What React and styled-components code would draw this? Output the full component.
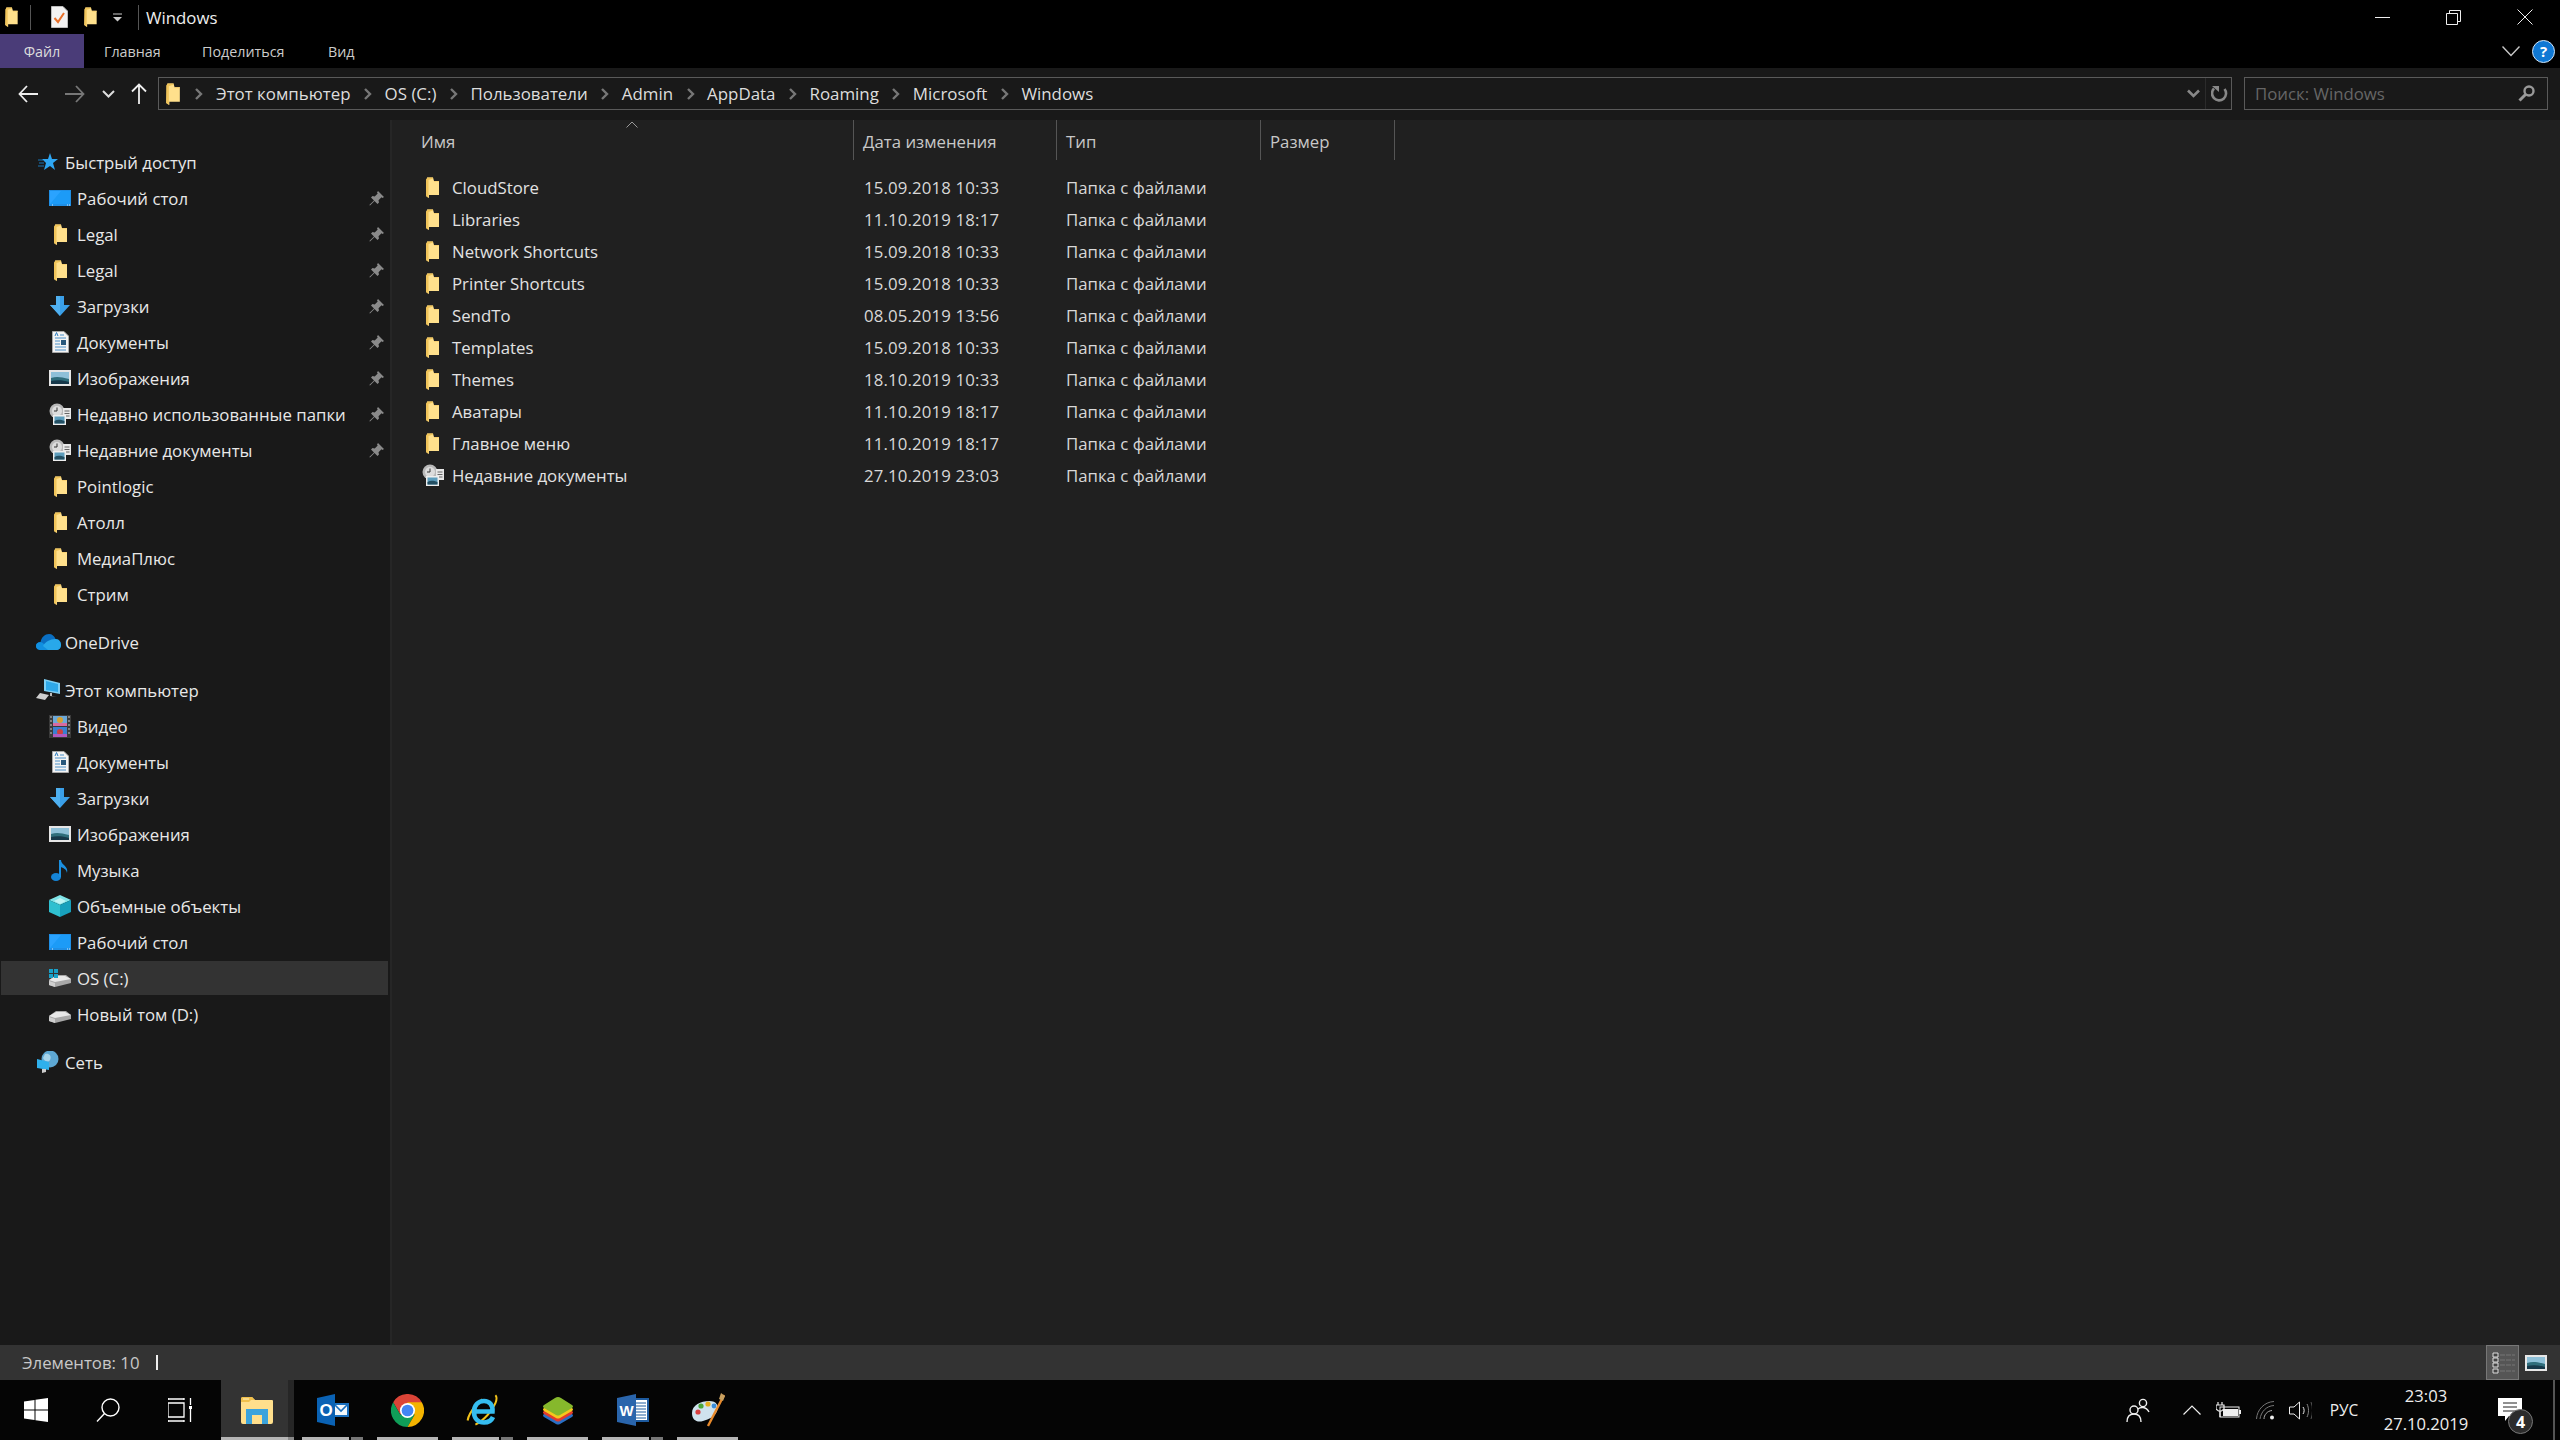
import React from "react";
import styled, { createGlobalStyle } from "styled-components";

const Global = createGlobalStyle`
  html, body { margin: 0; padding: 0; background: #000; overflow: hidden; }
  * { box-sizing: border-box; }
  svg { display: block; flex: none; }
`;
const FONT = `"Open Sans", "Noto Sans", sans-serif`;

const Win = styled.div`
  width: 2560px; height: 1440px; display: flex; flex-direction: column;
  font-family: ${FONT}; font-size: 16.8px; color: #e6e6e6; background: #191919; overflow: hidden;
`;
const TitleBar = styled.div`
  height: 34px; background: #000; display: flex; align-items: center; padding-left: 4px; flex: none;
`;
const QuickSlot = styled.div`
  display: flex; align-items: center; justify-content: center; width: ${p => p.$w}px; margin-right: ${p => p.$mr || 0}px;
`;
const TitleSep = styled.div`
  width: 1px; height: 25px; background: #555; margin-right: ${p => p.$mr}px;
`;
const TitleText = styled.div`
  font-size: 16.8px; color: #eee; flex: 1;
`;
const WinBtn = styled.div`
  width: 71px; display: flex; justify-content: center; align-items: center;
`;
const Ribbon = styled.div`
  height: 34px; flex: none; background: #000; display: flex; align-items: stretch; font-size: 14.3px; color: #ccc;
`;
const FileTab = styled.div`
  width: 84px; background: #4a3c78; color: #ddd; display: flex; align-items: center; justify-content: center;
`;
const Tab = styled.div`
  width: ${p => p.$w}px; padding-left: ${p => p.$pl}px; display: flex; align-items: center;
`;
const RibbonRight = styled.div`
  margin-left: auto; display: flex; align-items: center; gap: 12px; padding-right: 5px;
`;
const Help = styled.div`
  width: 23px; height: 23px; border-radius: 50%; background: #0f78d4; border: 1px solid #d0e4f7; color: #fff;
  font-size: 15px; font-weight: 700; display: flex; align-items: center; justify-content: center;
`;
const AddressRow = styled.div`
  height: 52px; flex: none; background: #191919; display: flex; align-items: flex-start; padding: 9px 12px 0 18px;
`;
const NavBtn = styled.div`
  width: ${p => p.$w}px; height: 33px; display: flex; align-items: center;
`;
const AddressBox = styled.div`
  width: 2074px; height: 33px; border: 1px solid #5a5a5a; display: flex; align-items: center; padding-left: 6px; margin-right: 12px;
`;
const Crumb = styled.span`
  font-size: 16.9px; color: #ddd; white-space: nowrap;
`;
const CrumbSep = styled.div`
  width: ${p => p.$w || 34}px; display: flex; justify-content: center;
`;
const AddrTail = styled.div`
  margin-left: auto; height: 100%; display: flex; align-items: center;
`;
const AddrDrop = styled.div`
  width: 24px; height: 100%; padding-right: 1px; display: flex; align-items: center; justify-content: center; border-right: 1px solid #2b2b2b;
`;
const AddrRefresh = styled.div`
  width: 25px; padding-left: 2px; display: flex; justify-content: center;
`;
const SearchBox = styled.div`
  width: 304px; height: 33px; border: 1px solid #5a5a5a; display: flex; align-items: center; justify-content: space-between;
  padding: 0 12px 0 10px; color: #666;
`;
const Main = styled.div`
  flex: 1; min-height: 0; display: flex;
`;
const Sidebar = styled.div`
  width: 392px; flex: none; background: #191919; border-right: 2px solid #262626; padding: 25px 2px 0 1px;
`;
const SideRow = styled.div`
  height: 34px; margin: ${p => (p.$top ? 14 : 0)}px 0 2px 0; display: flex; align-items: center;
  padding-left: ${p => (p.$head ? 35 : 47)}px; padding-right: 2px; background: ${p => (p.$sel ? "#333" : "transparent")};
  color: #e8e8e8;
`;
const SideIcon = styled.div`
  width: 24px; height: 24px; display: flex; align-items: center; justify-content: center; margin-right: 5px;
`;
const SideLabel = styled.span`
  flex: 1; white-space: nowrap;
`;
const PinSlot = styled.div`
  width: 17px;
`;
const ListPane = styled.div`
  flex: 1; background: #202020; position: relative;
`;
const HeaderRow = styled.div`
  height: 40px; display: flex; margin-bottom: 11px; color: #c8c8c8;
`;
const HeadCell = styled.div`
  width: ${p => p.$w}px; padding-left: ${p => p.$pl}px; border-right: 1px solid #555; display: flex; align-items: center; padding-top: 3px;
`;
const SortMark = styled.div`
  position: absolute; left: 234px; top: 1px;
`;
const FileRow = styled.div`
  height: 32px; display: flex; align-items: center; color: #e2e2e2;
`;
const NameCell = styled.div`
  width: 472px; padding-left: 33px; display: flex; align-items: center; flex: none;
`;
const FileIconSlot = styled.div`
  width: 27px; display: flex; margin-left: ${p => (p.$recent ? -3 : 0)}px; margin-right: ${p => (p.$recent ? 3 : 0)}px;
`;
const DateCell = styled.div`
  width: 202px; color: #d8d8d8; flex: none; letter-spacing: 0.15px;
`;
const TypeCell = styled.div`
  color: #d8d8d8;
`;
const StatusBar = styled.div`
  height: 35px; flex: none; background: #333; display: flex; align-items: center; padding-left: 22px; color: #c8c8c8;
`;
const StatusDivider = styled.div`
  width: 2px; height: 15px; background: #eee; margin-left: 16px;
`;
const ViewBtns = styled.div`
  margin-left: auto; display: flex; align-items: center; height: 100%; padding-right: 13px;
`;
const ViewBtn = styled.div`
  width: 33px; height: 35px; display: flex; align-items: center; justify-content: center; padding-left: 2px;
  background: #555; border: 1px solid #777; margin-right: 6px;
`;
const Taskbar = styled.div`
  height: 60px; flex: none; background: #050505; display: flex; align-items: stretch;
`;
const SysBtn = styled.div`
  width: 72px; display: flex; align-items: center; justify-content: center; flex: none;
`;
const ActiveApp = styled.div`
  width: 67px; height: 60px; margin-left: 5px; padding-left: 4px; position: relative; display: flex; align-items: center; justify-content: center; flex: none;
  background: #333;
`;
const AppSlot = styled.div`
  width: 75px; height: 60px; padding-right: 14px; position: relative; display: flex; align-items: center; justify-content: center; flex: none;
`;
const AppMark = styled.div`
  position: absolute; left: ${p => p.$l}px; bottom: 0; height: 3px; width: ${p => p.$w}px; background: ${p => p.$c || "#b5b5b5"};
`;
const ActiveSplit = styled.div`
  width: 6px; flex: none; background: #262626; position: relative; margin-right: 8px; height: 60px;
`;
const Tray = styled.div`
  margin-left: auto; display: flex; align-items: center; height: 100%; color: #eee;
`;
const TraySlot = styled.div`
  width: ${p => p.$w}px; display: flex; align-items: center; justify-content: center; flex: none;
`;
const Lang = styled.div`
  width: 54px; text-align: center; font-size: 15.5px;
`;
const Clock = styled.div`
  width: 110px; text-align: center; font-size: 16.6px; line-height: 28px; color: #eee;
`;
const Notify = styled.div`
  width: 72px; height: 100%; padding-right: 14px; display: flex; align-items: center; justify-content: center; position: relative;
`;
const Badge = styled.div`
  position: absolute; left: 27px; top: 29px; width: 25px; height: 25px; border-radius: 50%; background: #2c2c2c; border: 1px solid #777;
  color: #fff; font-size: 16px; font-weight: 700; display: flex; align-items: center; justify-content: center;
`;
const ShowDesktop = styled.div`
  width: 2px; height: 100%; background: #555; margin-right: 5px; flex: none;
`;

/* ---- icons ---- */
const Folder = ({ w = 14, h = 21 }) => (
  <svg width={w} height={h} viewBox="0 0 14 21">
    <path d="M2 0.5H8L9 4H14V18H4V21L1 19Z" fill="#FFE08C" />
    <path d="M1 2.500L2.500 0.5H8V1.500L3.500 3V21L1 19Z" fill="#F0C45A" />
    <path d="M9 4H14V5H9Z" fill="#F8D070" />
  </svg>
);
const Desktop = () => (
  <svg width="22" height="16" viewBox="0 0 22 16">
    <rect width="22" height="16" fill="#1f8fe6" />
    <rect x="1" y="1" width="20" height="13" fill="#2aa3ff" />
    <path d="M1 14L12 1H21V14Z" fill="#1c9bf7" />
    <path d="M3 15h1M18 15h1M20 15h1" stroke="#cfeaff" />
  </svg>
);
const Star = () => (
  <svg width="20" height="18" viewBox="0 0 20 18">
    <path d="M12 0L14 6H20L15 10L17 17L12 13L6 17L8 10L4 6H10Z" fill="#2ea6f2" />
    <path d="M0 7H5M1 10H6M0 13H6" stroke="#1976b8" strokeWidth="1" />
  </svg>
);
const Download = () => (
  <svg width="20" height="20" viewBox="0 0 20 20">
    <path d="M6 0H14V9H20L10 20L0 9H6Z" fill="#3a9fe8" />
    <path d="M6 0H10V20L0 9H6Z" fill="#4fb0f0" />
  </svg>
);
const Doc = () => (
  <svg width="17" height="22" viewBox="0 0 17 22">
    <path d="M0.5 .5H12L16.500 5V21.500H.5Z" fill="#f3f3f3" stroke="#a8a8a8" />
    <path d="M8 4H12M3 7H14M3 10H8M3 13H8M3 16H14M3 19H14" stroke="#4a90c8" strokeWidth="1" />
    <rect x="9" y="9" width="5" height="5" fill="#27567a" />
    <path d="M3 5L4.500 1.500L6 5" stroke="#2a7cc0" fill="none" />
  </svg>
);
const Picture = () => (
  <svg width="22" height="16" viewBox="0 0 22 16">
    <rect width="22" height="16" fill="#e6e6e6" />
    <rect x="2" y="2" width="18" height="12" fill="#8ec0d8" />
    <path d="M2 8C8 6 12 7 20 9V14H2Z" fill="#2f6d7b" />
    <path d="M2 11C7 10 14 10 20 12V14H2Z" fill="#17384a" />
  </svg>
);
const Recent = () => (
  <svg width="22" height="22" viewBox="0 0 22 22">
    <circle cx="8" cy="8" r="7.500" fill="#b8b8b8" />
    <circle cx="8" cy="8" r="5" fill="#dcdcdc" />
    <path d="M8 4.500V8H5" stroke="#333" fill="none" />
    <rect x="14" y="5" width="8" height="11" fill="#e8e8e8" />
    <path d="M15.500 8H20.500M15.500 10.500H20.500M15.500 13H20.500" stroke="#666" />
    <rect x="4" y="12" width="13" height="10" fill="#eee" />
    <rect x="5.500" y="13.500" width="10" height="7" fill="#5d9dbc" />
    <path d="M5.500 18C9 16 12 17 15.500 18V20.500H5.500Z" fill="#234f63" />
  </svg>
);
const Cloud = () => (
  <svg width="25" height="16" viewBox="0 0 25 16">
    <path d="M5 16C1 16 0 13.500 0 12C0 9 2.500 8 4.500 8C5.500 3 9 0 13 0C16 0 18.500 2 19.500 5C23 5 25 8 25 11C25 14 23 16 20 16Z" fill="#0a6fc2" />
    <path d="M5 16C1 16 0 13.500 0 12C0 9 3 7.500 6 8.500L16 16Z" fill="#1190e0" />
    <path d="M12 16L7 12C9 8 14 5 19.500 5C23 5 25 8 25 11C25 14 23 16 20 16Z" fill="#28a8ea" />
  </svg>
);
const PC = () => (
  <svg width="25" height="22" viewBox="0 0 25 22">
    <path d="M8 0L24 4V15L8 12Z" fill="#7fd0f5" />
    <path d="M10 2L22 5V13L10 11Z" fill="#2fa8e8" />
    <path d="M16 14V17L21 18L14 17V14Z" fill="#bbb" />
    <path d="M4 14L13 16L9 21L0 19Z" fill="#cfcfcf" />
  </svg>
);
const Video = () => (
  <svg width="22" height="23" viewBox="0 0 22 23">
    <rect width="22" height="23" fill="#3a3a3a" />
    <rect x="4" y="1" width="14" height="10" fill="#6ca8d8" />
    <rect x="4" y="12" width="14" height="10" fill="#3b7fd0" />
    <circle cx="11" cy="5" r="3" fill="#d6a030" />
    <circle cx="11" cy="17" r="3" fill="#d04040" />
    <rect x="4" y="8" width="14" height="3" fill="#d86aa0" />
    <rect x="4" y="19" width="14" height="3" fill="#b05ac0" />
    <path d="M1 2H3M1 6H3M1 10H3M1 14H3M1 18H3M19 2H21M19 6H21M19 10H21M19 14H21M19 18H21" stroke="#999" strokeWidth="1.400" />
  </svg>
);
const Music = () => (
  <svg width="18" height="22" viewBox="0 0 18 22">
    <ellipse cx="5" cy="18" rx="5" ry="4" fill="#1585d8" />
    <path d="M8 1H10C10 6 18 7 16 14C15.500 10 12 9 10 8V18H8Z" fill="#1a8fe0" />
  </svg>
);
const Cube = () => (
  <svg width="22" height="22" viewBox="0 0 22 22">
    <path d="M11 0L22 5L11 10L0 5Z" fill="#7fe4e8" />
    <path d="M0 5L11 10V22L0 17Z" fill="#2fc0d0" />
    <path d="M22 5L11 10V22L22 17Z" fill="#18a0bc" />
    <path d="M11 3L17 6L11 9L5 6Z" fill="#c0f4f4" />
  </svg>
);
const Drive = ({ win }) => (
  <svg width="22" height="18" viewBox="0 0 22 18">
    <path d="M0 11L7 6H17L22 10V14L6 18L0 16Z" fill="#a8a8a8" />
    <path d="M0 11L6 13L22 10L16 7H7Z" fill="#e8e8e8" />
    <path d="M0 12L6 14V18L0 16Z" fill="#cfcfcf" />
    {win && <path d="M0 0H4V4H0ZM5 0H9V4H5ZM0 5H4V9H0ZM5 5H9V9H5Z" fill="#19a0c8" />}
  </svg>
);
const Net = () => (
  <svg width="22" height="22" viewBox="0 0 22 22">
    <circle cx="13" cy="8" r="8.500" fill="#5ea8d4" />
    <path d="M8 3C12 2 15 5 13 9C11 12 7 10 6 7Z" fill="#a8d4ea" />
    <path d="M0 8L12 11V19L0 17Z" fill="#2fb0ec" />
    <path d="M5 18H9V21L5 22Z" fill="#ccc" />
  </svg>
);
const Pin = () => (
  <svg width="15" height="15" viewBox="0 0 15 15">
    <path d="M9 0L15 6L13.500 7L12.500 6.300L9.500 9.300L10 11.500L8.500 13L5.500 10L1 14.500L0.300 14L5 9.500L2 6.500L3.500 5L5.700 5.500L8.700 2.500L8 1.500Z" fill="#8a8a8a" />
  </svg>
);
const Chev = () => (
  <svg width="9" height="12" viewBox="0 0 9 12">
    <path d="M2 1L7 6L2 11" fill="none" stroke="#777" strokeWidth="2.400" />
  </svg>
);
const sideIcons = {
  folder: <Folder />, desktop: <Desktop />, star: <Star />, down: <Download />, doc: <Doc />, pic: <Picture />,
  recent: <Recent />, cloud: <Cloud />, pc: <PC />, video: <Video />, music: <Music />, cube: <Cube />,
  c: <Drive win />, d: <Drive />, net: <Net />,
};

const groups = [
  { head: ["star", "Быстрый доступ"], items: [
    ["desktop", "Рабочий стол", 1], ["folder", "Legal", 1], ["folder", "Legal", 1], ["down", "Загрузки", 1],
    ["doc", "Документы", 1], ["pic", "Изображения", 1], ["recent", "Недавно использованные папки", 1],
    ["recent", "Недавние документы", 1], ["folder", "Pointlogic"], ["folder", "Атолл"], ["folder", "МедиаПлюс"], ["folder", "Стрим"],
  ] },
  { head: ["cloud", "OneDrive"], items: [] },
  { head: ["pc", "Этот компьютер"], items: [
    ["video", "Видео"], ["doc", "Документы"], ["down", "Загрузки"], ["pic", "Изображения"], ["music", "Музыка"],
    ["cube", "Объемные объекты"], ["desktop", "Рабочий стол"], ["c", "OS (C:)", 0, true], ["d", "Новый том (D:)"],
  ] },
  { head: ["net", "Сеть"], items: [] },
];
const files = [
  ["CloudStore", "15.09.2018 10:33"], ["Libraries", "11.10.2019 18:17"], ["Network Shortcuts", "15.09.2018 10:33"],
  ["Printer Shortcuts", "15.09.2018 10:33"], ["SendTo", "08.05.2019 13:56"], ["Templates", "15.09.2018 10:33"],
  ["Themes", "18.10.2019 10:33"], ["Аватары", "11.10.2019 18:17"], ["Главное меню", "11.10.2019 18:17"],
  ["Недавние документы", "27.10.2019 23:03", true],
];
const crumbs = ["Этот компьютер", "OS (C:)", "Пользователи", "Admin", "AppData", "Roaming", "Microsoft", "Windows"];

/* taskbar logos */
const ExplorerLogo = () => (
  <svg width="32" height="27" viewBox="0 0 32 27">
    <path d="M0 2Q0 0 2 0H11L14 3H31Q32 3 32 4V25Q32 27 30 27H2Q0 27 0 25Z" fill="#ffdf8c" />
    <path d="M0 2Q0 0 2 0H11L14 3H10L8 5H0Z" fill="#f0c04c" />
    <path d="M2 2H8" stroke="#fff3c8" />
    <path d="M5 27V12H27V27H21V18H11V27Z" fill="#3ba3dc" />
  </svg>
);
const OutlookLogo = () => (
  <svg width="32" height="32" viewBox="0 0 32 32">
    <path d="M16 9H32V23H16Z" fill="#1a6fbe" />
    <path d="M18 11H30V21H18Z" fill="#f4f8fc" />
    <path d="M18 11L24 17L30 11" fill="none" stroke="#1a6fbe" strokeWidth="1.600" />
    <path d="M0 4L18 0V32L0 28Z" fill="#0a62b4" />
    <text x="9" y="22" textAnchor="middle" fontFamily="Liberation Sans" fontSize="17" fontWeight="700" fill="#fff">O</text>
  </svg>
);
const ChromeLogo = () => (
  <svg width="33" height="33" viewBox="0 0 48 48">
    <path d="M24 24L44.800 12A24 24 0 0 0 3.200 12L13.600 30Z" fill="#db4437" />
    <path d="M24 24L13.600 30L3.200 12A24 24 0 0 0 24 48L34.400 30Z" fill="#0f9d58" />
    <path d="M24 24L34.400 30L24 48A24 24 0 0 0 44.800 12H24Z" fill="#f4b400" />
    <circle cx="24" cy="24" r="11" fill="#fff" />
    <circle cx="24" cy="24" r="8.500" fill="#4285f4" />
  </svg>
);
const IELogo = () => (
  <svg width="34" height="34" viewBox="0 0 34 34">
    <ellipse cx="16" cy="17" rx="20" ry="7.500" fill="none" stroke="#f2c21a" strokeWidth="2" strokeDasharray="38 12 26 40" transform="rotate(-48 16 17)" />
    <path d="M8.500 18.500H26.500C27 12 23.500 8 18 8C12 8 8 12.500 8 19C8 25.500 12 29.500 18 29.500C22 29.500 25.500 27.500 27 24" fill="none" stroke="#35bdf0" strokeWidth="4.600" />
  </svg>
);
const Layer = ({ y, c }) => (
  <path d="M2 9L13 2Q16 0 19 2L30 9Q32 10.500 30 12L18 19Q16 20 14 19L2 12Q0 10.500 2 9Z" fill={c} transform={`translate(0 ${y})`} />
);
const BlueStacksLogo = () => (
  <svg width="32" height="29" viewBox="0 0 32 29">
    <Layer y={9} c="#2a6fc4" />
    <Layer y={6} c="#e23c2c" />
    <Layer y={3} c="#f5c81c" />
    <Layer y={0} c="#86b82c" />
  </svg>
);
const WordLogo = () => (
  <svg width="32" height="32" viewBox="0 0 32 32">
    <path d="M16 4H32V28H16Z" fill="#1d5a9e" />
    <path d="M18 6H30V26H18Z" fill="#fff" />
    <path d="M19 9H29M19 12H29M19 15H29M19 18H29M19 21H29M19 24H29" stroke="#1d5a9e" />
    <path d="M0 4L19 0V32L0 28Z" fill="#2a65ac" />
    <text x="9.500" y="22" textAnchor="middle" fontFamily="Liberation Sans" fontSize="15" fontWeight="700" fill="#fff">W</text>
  </svg>
);
const PaintLogo = () => (
  <svg width="34" height="34" viewBox="0 0 34 34">
    <path d="M1 20C1 12 10 8 18 8C26 8 28 13 26 18C24 24 18 26 12 28C6 30 1 27 1 20Z" fill="#cfe3ee" />
    <circle cx="7" cy="19" r="2.600" fill="#d84040" />
    <circle cx="10" cy="13" r="2.600" fill="#4ba83a" />
    <circle cx="17" cy="11" r="2.600" fill="#e8b020" />
    <circle cx="23" cy="13" r="2.400" fill="#3a8cd8" />
    <path d="M33 2L17 33" stroke="#e88a2c" strokeWidth="2.400" />
    <path d="M30 0L34 3L32 8L28 6Z" fill="#c8a060" />
  </svg>
);
const apps = [
  [<OutlookLogo key="o" />, [[0, 47], [49, 12]]],
  [<ChromeLogo key="c" />, [[0, 61]]],
  [<IELogo key="i" />, [[0, 47], [49, 12]]],
  [<BlueStacksLogo key="b" />, [[0, 61]]],
  [<WordLogo key="w" />, [[0, 47], [49, 12]]],
  [<PaintLogo key="p" />, [[0, 61]]],
];

export default function App() {
  return (
    <Win>
      <Global />
      <TitleBar>
        <QuickSlot $w={14} $mr={12}><Folder w={14} h={20} /></QuickSlot>
        <TitleSep $mr={19} />
        <QuickSlot $w={18} $mr={15}>
          <svg width="17" height="22" viewBox="0 0 17 22">
            <path d="M.5.5H12L16.500 5V21.500H.5Z" fill="#f2f2f2" stroke="#bbb" />
            <path d="M3.500 12L7 16L13 7" fill="none" stroke="#e8702a" strokeWidth="2" />
          </svg>
        </QuickSlot>
        <QuickSlot $w={14} $mr={16}><Folder w={14} h={20} /></QuickSlot>
        <QuickSlot $w={9} $mr={16}>
          <svg width="9" height="9" viewBox="0 0 9 9"><path d="M0 1H9" stroke="#ccc" /><path d="M0 4H9L4.500 8.500Z" fill="#ccc" /></svg>
        </QuickSlot>
        <TitleSep $mr={7} />
        <TitleText>Windows</TitleText>
        <WinBtn>
          <svg width="15" height="1" viewBox="0 0 15 1"><rect width="15" height="1" fill="#eee" /></svg>
        </WinBtn>
        <WinBtn>
          <svg width="15" height="15" viewBox="0 0 15 15"><path d="M3.500 3V.5H14.500V11.500H12M.5 3.500H11.500V14.500H.5Z" fill="none" stroke="#eee" /></svg>
        </WinBtn>
        <WinBtn>
          <svg width="16" height="16" viewBox="0 0 16 16"><path d="M.5.5L15.500 15.500M15.500.5L.5 15.500" stroke="#eee" /></svg>
        </WinBtn>
      </TitleBar>
      <Ribbon>
        <FileTab>Файл</FileTab>
        <Tab $w={98} $pl={20}>Главная</Tab>
        <Tab $w={146} $pl={20}>Поделиться</Tab>
        <Tab $w={60} $pl={0}>Вид</Tab>
        <RibbonRight>
          <svg width="18" height="11" viewBox="0 0 18 11"><path d="M.5 .5L9 9.500L17.500 .5" fill="none" stroke="#c8c8c8" strokeWidth="1.400" /></svg>
          <Help>?</Help>
        </RibbonRight>
      </Ribbon>
      <AddressRow>
        <NavBtn $w={47}>
          <svg width="20" height="18" viewBox="0 0 20 18"><path d="M9 1L1.500 9L9 17M1.500 9H20" fill="none" stroke="#eee" strokeWidth="1.800" /></svg>
        </NavBtn>
        <NavBtn $w={37}>
          <svg width="20" height="18" viewBox="0 0 20 18"><path d="M11 1L18.500 9L11 17M18.500 9H0" fill="none" stroke="#777" strokeWidth="1.800" /></svg>
        </NavBtn>
        <NavBtn $w={29}>
          <svg width="13" height="8" viewBox="0 0 13 8"><path d="M1 1L6.500 6.500L12 1" fill="none" stroke="#ddd" strokeWidth="2" /></svg>
        </NavBtn>
        <NavBtn $w={27}>
          <svg width="16" height="21" viewBox="0 0 16 21"><path d="M1 8.500L8 1.500L15 8.500M8 1.500V21" fill="none" stroke="#eee" strokeWidth="1.800" /></svg>
        </NavBtn>
        <AddressBox>
          <Folder w={15} h={22} />
          <CrumbSep $w={36}><Chev /></CrumbSep>
          {crumbs.map((c, i) => (
            <React.Fragment key={c}>
              <Crumb>{c}</Crumb>
              {i < crumbs.length - 1 && <CrumbSep><Chev /></CrumbSep>}
            </React.Fragment>
          ))}
          <AddrTail>
            <AddrDrop>
              <svg width="13" height="9" viewBox="0 0 13 9"><path d="M1 1.500L6.500 7L12 1.500" fill="none" stroke="#888" strokeWidth="2.600" /></svg>
            </AddrDrop>
            <AddrRefresh>
              <svg width="17" height="18" viewBox="0 0 17 18"><path d="M3 3.500A7 7 0 1 0 13.500 4" fill="none" stroke="#888" strokeWidth="2.600" /><path d="M1 1H8V7Z" fill="#888" /></svg>
            </AddrRefresh>
          </AddrTail>
        </AddressBox>
        <SearchBox>
          Поиск: Windows
          <svg width="17" height="17" viewBox="0 0 17 17"><circle cx="11" cy="6" r="4.500" fill="none" stroke="#999" strokeWidth="2.400" /><path d="M7.500 9.500L1.500 15.500" stroke="#999" strokeWidth="3" /></svg>
        </SearchBox>
      </AddressRow>
      <Main>
        <Sidebar>
          {groups.map((g, gi) => (
            <React.Fragment key={g.head[1]}>
              <SideRow $head $top={gi > 0}>
                <SideIcon>{sideIcons[g.head[0]]}</SideIcon>
                <SideLabel>{g.head[1]}</SideLabel>
              </SideRow>
              {g.items.map(([ic, label, pin, sel], i) => (
                <SideRow key={label + i} $sel={sel}>
                  <SideIcon>{sideIcons[ic]}</SideIcon>
                  <SideLabel>{label}</SideLabel>
                  {pin ? <PinSlot><Pin /></PinSlot> : null}
                </SideRow>
              ))}
            </React.Fragment>
          ))}
        </Sidebar>
        <ListPane>
          <SortMark>
            <svg width="12" height="7" viewBox="0 0 12 7"><path d="M.5 6.500L6 1L11.500 6.500" fill="none" stroke="#999" /></svg>
          </SortMark>
          <HeaderRow>
            <HeadCell $w={462} $pl={29}>Имя</HeadCell>
            <HeadCell $w={203} $pl={9}>Дата изменения</HeadCell>
            <HeadCell $w={204} $pl={9}>Тип</HeadCell>
            <HeadCell $w={134} $pl={9}>Размер</HeadCell>
          </HeaderRow>
          {files.map(([n, d, recent]) => (
            <FileRow key={n}>
              <NameCell>
                <FileIconSlot $recent={recent}>{recent ? <Recent /> : <Folder />}</FileIconSlot>
                {n}
              </NameCell>
              <DateCell>{d}</DateCell>
              <TypeCell>Папка с файлами</TypeCell>
            </FileRow>
          ))}
        </ListPane>
      </Main>
      <StatusBar>
        Элементов: 10
        <StatusDivider />
        <ViewBtns>
          <ViewBtn>
            <svg width="24" height="22" viewBox="0 0 24 22">
              <path d="M1 1H6V5H1ZM1 6H6V10H1ZM1 11H6V15H1ZM1 17H6V21H1Z" fill="#444" stroke="#ddd" />
              <path d="M8 3H23M8 8H23M8 13H23M8 19H23" stroke="#777" strokeDasharray="5 1" />
            </svg>
          </ViewBtn>
          <Picture />
        </ViewBtns>
      </StatusBar>
      <Taskbar>
        <SysBtn>
          <svg width="24" height="24" viewBox="0 0 24 24"><path d="M0 3.500L10.500 2V11.500H0ZM11.500 1.800L24 0V11.500H11.500ZM0 12.500H10.500V22L0 20.500ZM11.500 12.500H24V24L11.500 22.200Z" fill="#fff" /></svg>
        </SysBtn>
        <SysBtn>
          <svg width="24" height="24" viewBox="0 0 24 24"><circle cx="14.500" cy="9.500" r="8.500" fill="none" stroke="#fff" strokeWidth="1.400" /><path d="M8.500 15.500L1 23.500" stroke="#fff" strokeWidth="1.400" /></svg>
        </SysBtn>
        <SysBtn>
          <svg width="24" height="24" viewBox="0 0 24 24"><path d="M0 1H16M0 23H16M0 5H16V19H0ZM0 0V2M16 0V2M0 22V24M16 22V24" fill="none" stroke="#fff" strokeWidth="1.300" /><path d="M22.500 0V7M22.500 11V24" stroke="#fff" strokeWidth="1.300" /><rect x="21" y="8" width="3" height="3" fill="#fff" /></svg>
        </SysBtn>
        <ActiveApp>
          <ExplorerLogo />
          <AppMark $l={0} $w={67} />
        </ActiveApp>
        <ActiveSplit><AppMark $l={0} $w={6} $c="#8a8a8a" /></ActiveSplit>
        {apps.map(([logo, marks], i) => (
          <AppSlot key={i}>
            {logo}
            {marks.map(([l, w], j) => <AppMark key={j} $l={l} $w={w} $c={j ? "#777" : "#b5b5b5"} />)}
          </AppSlot>
        ))}
        <Tray>
          <TraySlot $w={74}>
            <svg width="24" height="24" viewBox="0 0 24 24"><circle cx="8" cy="12" r="4" fill="none" stroke="#eee" strokeWidth="1.400" /><path d="M1 24C1 18 4 16 8 16C12 16 15 18 15 24" fill="none" stroke="#eee" strokeWidth="1.400" /><circle cx="17" cy="5" r="3.600" fill="none" stroke="#eee" strokeWidth="1.400" /><path d="M12 11C14 9 20 8 23 14" fill="none" stroke="#eee" strokeWidth="1.400" /></svg>
          </TraySlot>
          <TraySlot $w={34}>
            <svg width="18" height="10" viewBox="0 0 18 10"><path d="M.5 9.500L9 1L17.500 9.500" fill="none" stroke="#eee" strokeWidth="1.200" /></svg>
          </TraySlot>
          <TraySlot $w={38}>
            <svg width="25" height="16" viewBox="0 0 25 16"><path d="M2 0V3M6 0V3M0 3H8V7L5.500 9H2.500L0 7ZM4 9V15" fill="none" stroke="#eee" strokeWidth="1.200" /><rect x="4" y="5" width="19" height="10" fill="none" stroke="#eee" /><rect x="7" y="7" width="15" height="7" fill="#eee" /><rect x="23" y="8" width="2" height="4" fill="#eee" /></svg>
          </TraySlot>
          <TraySlot $w={36}>
            <svg width="19" height="19" viewBox="0 0 19 19"><path d="M.5 18C1 9 8 1 18 .5M4 18C5 11 10 5 18 4.500" fill="none" stroke="#777" /><path d="M8 18C8 14 11 10 16 9.500" fill="none" stroke="#aaa" /><circle cx="16" cy="16.500" r="2" fill="#eee" /></svg>
          </TraySlot>
          <TraySlot $w={34}>
            <svg width="23" height="19" viewBox="0 0 23 19"><path d="M.5 6H5L10.500 1V18L5 13H.5Z" fill="none" stroke="#eee" /><path d="M14 6C15.500 8 15.500 11 14 13" fill="none" stroke="#eee" /><path d="M18 3C20 7 20 12 18 16" fill="none" stroke="#888" /><path d="M22 1C24 6 24 13 22 18" fill="none" stroke="#555" /></svg>
          </TraySlot>
          <Lang>РУС</Lang>
          <Clock>23:03<br />27.10.2019</Clock>
          <Notify>
            <svg width="24" height="24" viewBox="0 0 24 24"><path d="M0 0H24V18H11L7 23V18H0Z" fill="#fff" /><path d="M5 5H19M5 9H19M5 13H19" stroke="#222" /></svg>
            <Badge>4</Badge>
          </Notify>
          <ShowDesktop />
        </Tray>
      </Taskbar>
    </Win>
  );
}
